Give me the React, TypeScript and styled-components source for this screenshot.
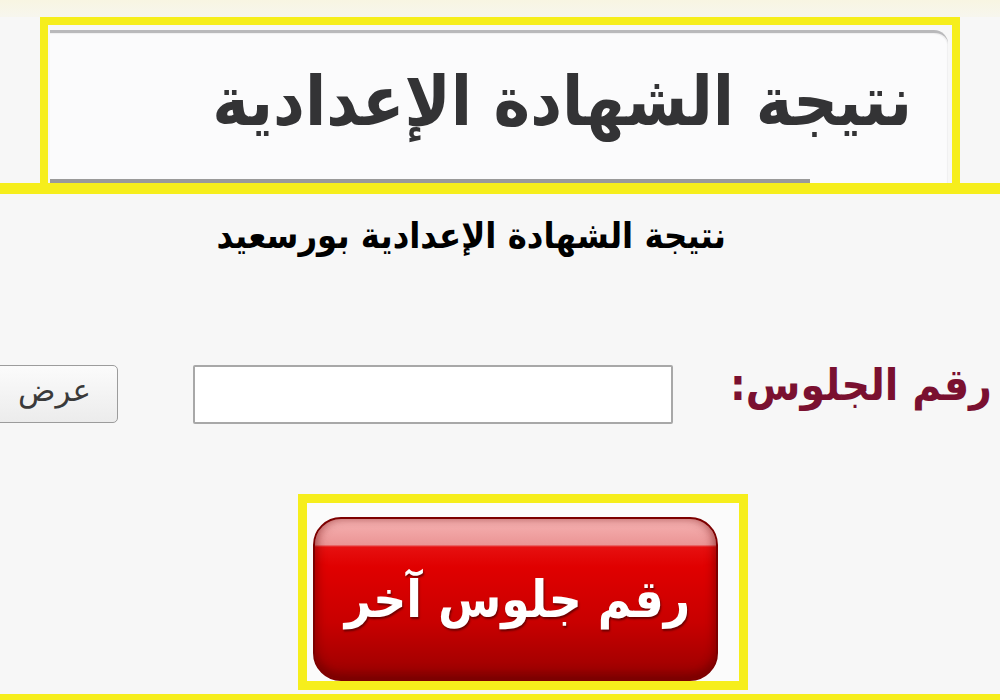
import React from "react";
import styled, { createGlobalStyle } from "styled-components";

const YELLOW = "#f6ee1c";

const GlobalStyle = createGlobalStyle`
  html, body {
    margin: 0;
    padding: 0;
    background: #f7f7f7;
    width: 1000px;
    height: 700px;
    overflow: hidden;
  }
  * { box-sizing: border-box; }
`;

const Page = styled.div`
  width: 1000px;
  height: 700px;
  display: flex;
  flex-direction: column;
  background: #f7f7f7;
  overflow: hidden;
  font-family: "DejaVu Sans", sans-serif;
`;

const TopStrip = styled.div`
  height: 17px;
  background: linear-gradient(#f8f5e2, #f7f6ee);
`;

const HeaderFrame = styled.div`
  margin: 0 40px;
  height: 166px;
  border: 8px solid ${YELLOW};
  border-bottom: none;
  padding: 5px 4px 0 2px;
  display: flex;
`;

const Panel = styled.div`
  flex: 1;
  display: flex;
  flex-direction: column;
  background: #fbfbfc;
  border-top: 3px solid #b9b9bb;
  border-top-right-radius: 14px;
  box-shadow: inset -1px 1px 1px rgba(0, 0, 0, 0.05);
`;

const HeaderTitle = styled.h1`
  margin: 26px 36px 0 0;
  direction: rtl;
  text-align: right;
  font-family: "DejaVu Sans Condensed", "DejaVu Sans", sans-serif;
  font-weight: 700;
  font-size: 69px;
  line-height: 84px;
  color: #333335;
  white-space: nowrap;
`;

const PanelUnderline = styled.div`
  margin-top: auto;
  width: 760px;
  height: 4px;
  background: #9a9a9a;
`;

const YellowRule = styled.div<{ $h: number }>`
  height: ${(p) => p.$h}px;
  background: ${YELLOW};
  flex-shrink: 0;
`;

const SubTitle = styled.h2`
  margin: 18px 0 0 220px;
  width: 506px;
  direction: rtl;
  text-align: center;
  font-family: "DejaVu Sans Condensed", "DejaVu Sans", sans-serif;
  font-weight: 700;
  font-size: 36px;
  line-height: 48px;
  color: #000;
  white-space: nowrap;
`;

const FormRow = styled.div`
  margin: 104px 0 0 -40px;
  display: flex;
  align-items: center;
  height: 60px;
`;

const ShowButton = styled.button`
  width: 158px;
  height: 58px;
  border: 1.5px solid #9c9c9c;
  border-radius: 5px;
  background: linear-gradient(#fbfbfb, #ececec);
  color: #3a3a3a;
  font-family: "DejaVu Sans", sans-serif;
  font-size: 31px;
  padding: 0 26px 8px 0;
  direction: rtl;
  text-align: right;
  flex-shrink: 0;
`;

const SeatInput = styled.input`
  margin-left: 75px;
  width: 480px;
  height: 59px;
  border: 2px solid #a8a8a8;
  border-radius: 2px;
  background: #fff;
  flex-shrink: 0;
`;

const SeatLabel = styled.label`
  margin-left: 57px;
  direction: rtl;
  font-family: "DejaVu Sans Condensed", "DejaVu Sans", sans-serif;
  font-weight: 700;
  font-size: 44px;
  color: #7a1030;
  white-space: nowrap;
  padding-bottom: 20px;
  flex-shrink: 0;
`;

const BottomFrame = styled.div`
  margin: 70px 0 0 298px;
  width: 450px;
  height: 196px;
  border: 9px solid ${YELLOW};
  padding: 14px 21px 0 6px;
  background: #fbfbfb;
  display: flex;
`;

const AnotherButton = styled.button`
  flex: 1;
  height: 164px;
  border: 2px solid #7c0000;
  border-radius: 28px;
  background: linear-gradient(
    #f6b3b3 0%,
    #eb9595 16%,
    #e61010 17.5%,
    #e00000 30%,
    #c80000 65%,
    #990000 100%
  );
  box-shadow: inset 0 -6px 10px rgba(80, 0, 0, 0.35),
    inset 4px 0 8px rgba(120, 0, 0, 0.25), inset -4px 0 8px rgba(120, 0, 0, 0.25);
  color: #fff;
  direction: rtl;
  white-space: nowrap;
  font-family: "DejaVu Sans Condensed", "DejaVu Sans", sans-serif;
  font-weight: 700;
  font-size: 51px;
  padding: 0 0 0 4px;
  text-shadow: 1px 2px 2px rgba(70, 0, 0, 0.7);
`;

export default function App() {
  return (
    <Page>
      <GlobalStyle />
      <TopStrip />
      <HeaderFrame>
        <Panel>
          <HeaderTitle>نتيجة الشهادة الإعدادية</HeaderTitle>
          <PanelUnderline />
        </Panel>
      </HeaderFrame>
      <YellowRule $h={11} />
      <SubTitle>نتيجة الشهادة الإعدادية بورسعيد</SubTitle>
      <FormRow>
        <ShowButton>عرض</ShowButton>
        <SeatInput type="text" />
        <SeatLabel>رقم الجلوس:</SeatLabel>
      </FormRow>
      <BottomFrame>
        <AnotherButton>رقم جلوس آخر</AnotherButton>
      </BottomFrame>
      <YellowRule $h={6} style={{ marginTop: "auto" }} />
    </Page>
  );
}
